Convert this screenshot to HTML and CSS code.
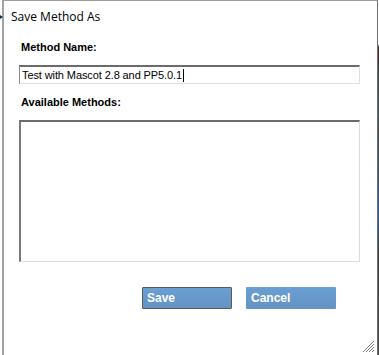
FILE: index.html
```html
<!DOCTYPE html>
<html lang="en">
<head>
    <meta charset="UTF-8">
    <title>Save Method As</title>
    <link rel="stylesheet" href="styles.css">
</head>
<body>
    <div class="dialog">
        <span class="corner-arrow"></span>
        <div class="title">Save Method As</div>
        <div class="form">
            <div class="label">Method Name:</div>
            <div class="text-input">Test with Mascot 2.8 and PP5.0.1<span class="caret"></span></div>
            <div class="label label-list">Available Methods:</div>
            <div class="list-box"></div>
            <div class="buttons">
                <div class="btn btn-focus">Save</div>
                <div class="btn">Cancel</div>
            </div>
        </div>
        <svg class="grip" width="12" height="12" viewBox="0 0 12 12">
            <path d="M11 3 L3 11 M11 6 L6 11 M11 9 L9 11 M11 0 L0 11" stroke="#7a7a7a" stroke-width="1"/>
        </svg>
        <span class="edge"></span>
    </div>
</body>
</html>
```

FILE: styles.css
```css
html, body {
    margin: 0;
    padding: 0;
    background: #ffffff;
}
body {
    width: 379px;
    height: 355px;
    overflow: hidden;
    font-family: "Liberation Sans", Arial, sans-serif;
}
.dialog {
    position: relative;
    box-sizing: border-box;
    margin-left: 2px;
    width: 376px;
    height: 355px;
    border-left: 2px solid #a3a3a3;
    border-right: 1px solid #6e6e6e;
    border-top: 1px solid #9c9c9c;
    background: #ffffff;
}
.corner-arrow {
    position: absolute;
    left: -4px;
    top: 14px;
    width: 0;
    height: 0;
    border-top: 2px solid transparent;
    border-bottom: 2px solid transparent;
    border-left: 3px solid #1b2a44;
}
.title {
    padding: 8px 0 0 7px;
    font-family: "Open Sans", "Liberation Sans", sans-serif;
    font-size: 12px;
    line-height: 15px;
    color: #000000;
}
.form {
    display: flex;
    flex-direction: column;
    padding: 0 17px 0 15px;
}
.label {
    margin-top: 17px;
    padding-left: 2px;
    font-size: 11px;
    font-weight: bold;
    line-height: 13px;
    color: #000000;
}
.label-list {
    margin-top: 12px;
}
.text-input {
    box-sizing: border-box;
    margin-top: 11px;
    height: 19px;
    padding: 2px 0 0 2px;
    border-top: 2px solid #6b6b6b;
    border-left: 1px solid #8a8a8a;
    border-right: 1px solid #e0e0e0;
    border-bottom: 1px solid #e0e0e0;
    font-size: 11px;
    letter-spacing: -0.1px;
    line-height: 13px;
    color: #000000;
    white-space: nowrap;
}
.caret {
    display: inline-block;
    width: 1px;
    height: 13px;
    margin-left: 1px;
    vertical-align: top;
    background: #000000;
}
.list-box {
    box-sizing: border-box;
    margin-top: 11px;
    height: 142px;
    border-top: 2px solid #6b6b6b;
    border-left: 2px solid #7a7a7a;
    border-right: 1px solid #dedede;
    border-bottom: 1px solid #dedede;
}
.buttons {
    display: flex;
    gap: 14px;
    margin-top: 25px;
    padding-left: 123px;
}
.btn {
    box-sizing: border-box;
    width: 90px;
    height: 22px;
    padding: 4px 0 0 5px;
    background: linear-gradient(#6aa0d2, #6592c4);
    border-radius: 1px;
    color: #ffffff;
    font-size: 12px;
    font-weight: bold;
    line-height: 14px;
}
.btn-focus {
    border: 1px solid #5a5a5a;
    padding: 3px 0 0 4px;
}
.grip {
    position: absolute;
    right: 2px;
    bottom: 2px;
}
.edge {
    position: absolute;
    right: -3px;
    top: 0;
    width: 2px;
    height: 355px;
    background: linear-gradient(#ffffff 0, #ffffff 12%, #3a3a3a 13%, #5a2a24 14%, #3a3a3a 18%, #3c5a56 32%, #444 36%, #2f5f95 60%, #3a3a3a 70%, #444 100%);
}
```
